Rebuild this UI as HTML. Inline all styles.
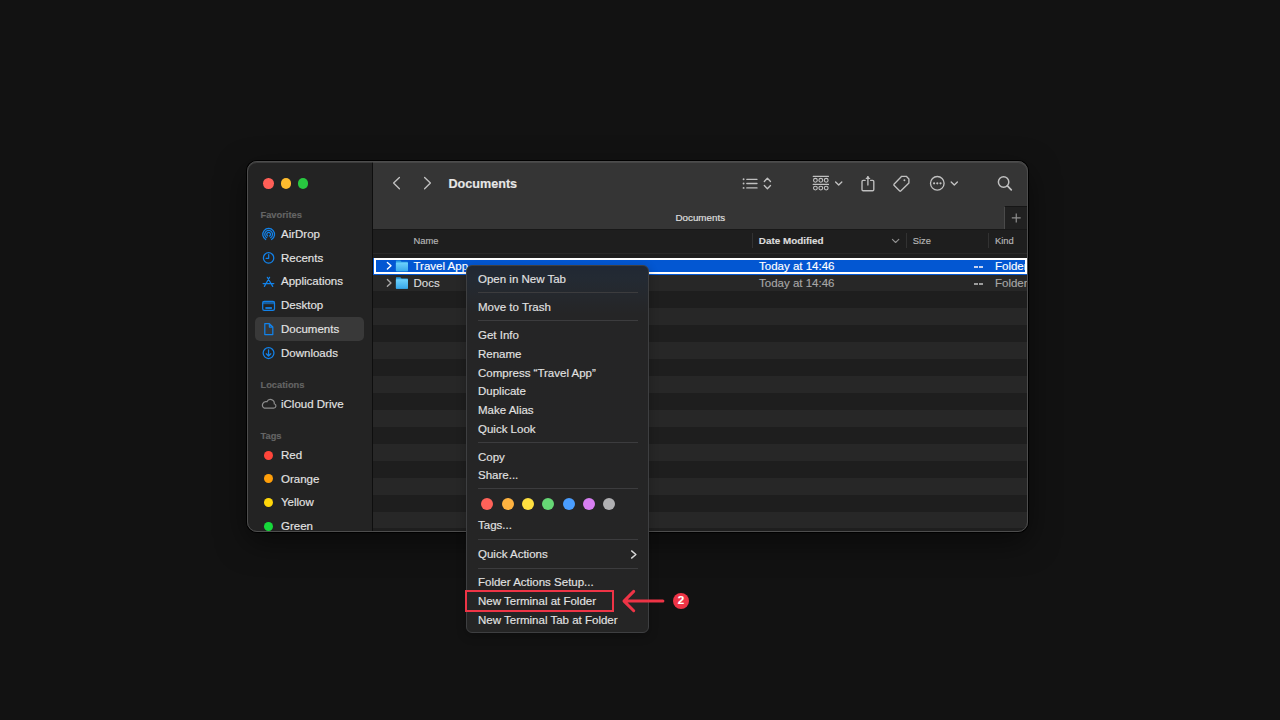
<!DOCTYPE html>
<html><head><meta charset="utf-8">
<style>
*{margin:0;padding:0;box-sizing:border-box}
html,body{width:1280px;height:720px;overflow:hidden;background:#121212;font-family:"Liberation Sans",sans-serif;}
.a{position:absolute}
.t{position:absolute;white-space:nowrap;-webkit-text-stroke:0.15px currentColor}
#win{position:absolute;left:247px;top:161px;width:781px;height:371px;border-radius:10px;overflow:hidden;background:#1e1e1e;box-shadow:0 0 0 1px #000,0 10px 30px rgba(0,0,0,.5)}
#wb{position:absolute;left:247px;top:161px;width:781px;height:371px;border-radius:10px;border:1px solid #4d4d4d;box-shadow:inset 0 1px 0 rgba(90,90,90,.45);pointer-events:none}
#pg{position:absolute;left:-247px;top:-161px;width:1280px;height:720px}
.side{left:247px;top:161px;width:125px;height:371px;background:#232323}
.sdiv{left:372px;top:161px;width:1px;height:371px;background:#0e0e0e}
.tb{left:373px;top:161px;width:655px;height:68px;background:#353535}
.tbl{left:373px;top:229px;width:655px;height:1px;background:#181818}
.hdr{left:373px;top:230px;width:655px;height:22px;background:#1e1e1e}
.hl{left:373px;top:252.5px;width:655px;height:1.7px;background:#292929}
.row{left:373px;width:655px;height:16.93px}
.lt{background:#272727}
.sb{font-size:11.5px;color:#e4e4e4;line-height:16px;left:281px}
.sh{font-size:9.3px;font-weight:bold;color:#656565;line-height:12px;left:260.5px}
.mi{font-size:11.5px;color:#e2e2e2;line-height:16px;left:478px}
.sep{left:477.5px;width:160px;height:1px;background:#3c3c3e}
.ht{font-size:9.4px;color:#b8b8b8;line-height:14px}
.rt{font-size:11.5px;color:#dcdcdc;line-height:16px}
.dot{border-radius:50%}
</style></head><body>
<div id="win"><div id="pg">
  <div class="a side"></div>
  <div class="a sdiv"></div>
  <div class="a tb"></div>
  <div class="a tbl"></div>
  <div class="a hdr"></div>
  <div class="a hl"></div>
  <!-- rows -->
  <div class="a row lt" style="top:274.50px"></div>
  <div class="a row lt" style="top:308.36px"></div>
  <div class="a row lt" style="top:342.22px"></div>
  <div class="a row lt" style="top:376.08px"></div>
  <div class="a row lt" style="top:409.94px"></div>
  <div class="a row lt" style="top:443.80px"></div>
  <div class="a row lt" style="top:477.66px"></div>
  <div class="a row lt" style="top:511.52px"></div>

  <!-- traffic lights -->
  <div class="a dot" style="left:263.2px;top:178.1px;width:10.8px;height:10.8px;background:#ff5f57"></div>
  <div class="a dot" style="left:280.5px;top:178.1px;width:10.8px;height:10.8px;background:#febc2e"></div>
  <div class="a dot" style="left:297.7px;top:178.1px;width:10.8px;height:10.8px;background:#28c840"></div>

  <!-- sidebar -->
  <div class="t sh" style="top:209.4px">Favorites</div>
  <div class="t sb" style="top:226.3px">AirDrop</div>
  <div class="t sb" style="top:250px">Recents</div>
  <div class="t sb" style="top:273.3px">Applications</div>
  <div class="t sb" style="top:297.3px">Desktop</div>
  <div class="a" style="left:255px;top:317px;width:109px;height:23.5px;border-radius:5px;background:#393939"></div>
  <div class="t sb" style="top:321px">Documents</div>
  <div class="t sb" style="top:345px">Downloads</div>
  <div class="t sh" style="top:379.3px">Locations</div>
  <div class="t sb" style="top:395.5px">iCloud Drive</div>
  <div class="t sh" style="top:430.2px">Tags</div>
  <div class="a dot" style="left:264px;top:450.8px;width:9px;height:9px;background:#ff453a"></div>
  <div class="t sb" style="top:447px">Red</div>
  <div class="a dot" style="left:264px;top:474.3px;width:9px;height:9px;background:#ff9f0a"></div>
  <div class="t sb" style="top:470.5px">Orange</div>
  <div class="a dot" style="left:264px;top:497.8px;width:9px;height:9px;background:#ffd60a"></div>
  <div class="t sb" style="top:494.3px">Yellow</div>
  <div class="a dot" style="left:264px;top:521.5px;width:9px;height:9px;background:#16d83a"></div>
  <div class="t sb" style="top:518px">Green</div>

  <!-- toolbar title -->
  <div class="t" style="left:448.5px;top:175px;font-size:12.6px;font-weight:bold;color:#e6e6e6;line-height:18px">Documents</div>
  <!-- tab bar -->
  <div class="t" style="left:675.5px;top:210.5px;font-size:9.8px;color:#e0e0e0;line-height:14px">Documents</div>
  <div class="a" style="left:1003.9px;top:205.8px;width:24px;height:23.2px;background:#212121;border-left:1px solid #4a4a4a;border-top:1px solid #161616"></div>

  <!-- header -->
  <div class="t ht" style="left:413.5px;top:233.5px">Name</div>
  <div class="a" style="left:752px;top:233px;width:1px;height:15px;background:#323232"></div>
  <div class="t ht" style="left:758.8px;top:233.5px;font-size:9.9px;font-weight:bold;color:#dcdcdc">Date Modified</div>
  <div class="a" style="left:906px;top:233px;width:1px;height:15px;background:#323232"></div>
  <div class="t ht" style="left:912.7px;top:233.5px">Size</div>
  <div class="a" style="left:988px;top:233px;width:1px;height:15px;background:#323232"></div>
  <div class="t ht" style="left:995px;top:233.5px">Kind</div>

  <!-- selected row -->
  <div class="a" style="left:373px;top:257.5px;width:655px;height:17.1px;background:#0357d2"></div>
  <div class="a" style="left:373.8px;top:258.2px;width:653.6px;height:15.8px;border:2px solid #ffffff"></div>
  <div class="t rt" style="left:413.5px;top:258.3px;color:#fff">Travel App</div>
  <div class="t rt" style="left:759px;top:258.3px;color:#fff">Today at 14:46</div>
  <div class="a" style="left:974px;top:266px;width:4.3px;height:1.6px;background:#c6d3f2"></div><div class="a" style="left:979.2px;top:266px;width:4.3px;height:1.6px;background:#c6d3f2"></div>
  <div class="t rt" style="left:995px;top:258.3px;color:#fff">Folder</div>

  <div class="t rt" style="left:413.5px;top:275.4px">Docs</div>
  <div class="t rt" style="left:759px;top:275.4px;color:#a6a6a6">Today at 14:46</div>
  <div class="a" style="left:974px;top:283px;width:4.3px;height:1.6px;background:#9c9c9c"></div><div class="a" style="left:979.2px;top:283px;width:4.3px;height:1.6px;background:#9c9c9c"></div>
  <div class="t rt" style="left:995px;top:275.4px;color:#a6a6a6">Folder</div>

  <svg class="a" style="left:0;top:0" width="1280" height="720" viewBox="0 0 1280 720">
    <defs>
      <linearGradient id="fg" x1="0" y1="0" x2="0" y2="1"><stop offset="0" stop-color="#6fd3fd"/><stop offset="1" stop-color="#38a8ea"/></linearGradient>
    </defs>
    <g fill="none" stroke="#1282ea" stroke-width="1.25" stroke-linecap="round" stroke-linejoin="round">
      <g transform="translate(0,0.8)"><path d="M265.7 238.7 A5.9 5.9 0 1 1 271.6 238.7"/>
      <path d="M266.7 236.9 A3.9 3.9 0 1 1 270.6 236.9"/>
      <path d="M267.7 235.2 A1.9 1.9 0 1 1 269.6 235.2"/></g>
      <circle cx="268.6" cy="257.9" r="5.2"/>
      <path d="M268.7 254.6 V258.3 H266.1"/>
      <path d="M267.3 277.3 L272.7 286.4 M269.6 277.3 L264.4 286.4 M263.1 283.6 H273.8"/>
      <rect x="262.7" y="301.3" width="11.8" height="9" rx="1.6"/>
      <path d="M265.4 308 H271.9" stroke-width="1.8" stroke-linecap="butt"/>
      <path d="M264.8 323.6 H269.4 L272.8 327 V334.6 H264.8 Z M269.4 323.6 V327 H272.8"/>
      <circle cx="268.55" cy="353.1" r="5.4"/>
      <path d="M268.55 349.9 V356 M266.3 353.8 L268.55 356.1 L270.8 353.8"/>
    </g>
    <rect x="262.7" y="301.3" width="11.8" height="2.9" fill="#1282ea" opacity="0.6"/>
    <path d="M264.4 408.2 H273.6 A2.3 2.3 0 0 0 274.3 403.7 A3.9 3.9 0 0 0 266.9 401.7 A3.5 3.5 0 0 0 264.4 408.2 Z" fill="none" stroke="#8c8c8c" stroke-width="1.2"/>
    <!-- toolbar -->
    <g fill="none" stroke="#c0c0c0" stroke-width="1.35" stroke-linecap="round" stroke-linejoin="round">
      <path d="M399.4 177.4 L393.6 183.1 L399.4 188.7"/>
      <path d="M424.6 177.4 L430.4 183.1 L424.6 188.7"/>
      <path d="M746.8 179.3 H757 M746.8 183.5 H757 M746.8 187.9 H757"/>
      <path d="M764.3 181.5 L767.4 178.3 L770.5 181.5 M764.3 185.5 L767.4 188.7 L770.5 185.5"/>
      <path d="M813.2 176.3 H828.5 M813.2 184.4 H828.5" stroke-width="1.2"/>
      <circle cx="815.4" cy="180.3" r="1.9" stroke-width="1.1"/><circle cx="820.8" cy="180.3" r="1.9" stroke-width="1.1"/><circle cx="826.2" cy="180.3" r="1.9" stroke-width="1.1"/>
      <circle cx="815.4" cy="188.1" r="1.9" stroke-width="1.1"/><circle cx="820.8" cy="188.1" r="1.9" stroke-width="1.1"/><circle cx="826.2" cy="188.1" r="1.9" stroke-width="1.1"/>
      <path d="M835.6 182 L838.7 185.1 L841.8 182"/>
      <path d="M865.2 180.3 H863.2 Q862 180.3 862 181.5 V189.5 Q862 190.7 863.2 190.7 H872.6 Q873.8 190.7 873.8 189.5 V181.5 Q873.8 180.3 872.6 180.3 H870.6"/>
      <path d="M867.9 185 V176.6"/>
      <path d="M901.7 176.3 H906.3 L908.9 178.9 V183 L900.7 191 Q900.2 191.4 899.7 191 L894 185.3 Q893.6 184.8 894 184.3 Z"/>
      <circle cx="937.3" cy="183.3" r="6.8"/>
      <path d="M951.2 182 L954.3 185.1 L957.4 182"/>
      <circle cx="1003.6" cy="182" r="5.2" stroke-width="1.5"/>
      <path d="M1007.4 185.9 L1011.3 189.8" stroke-width="1.7"/>
    </g>
    <g fill="#c0c0c0">
      <circle cx="743.6" cy="179.3" r="0.95"/><circle cx="743.6" cy="183.5" r="0.95"/><circle cx="743.6" cy="187.9" r="0.95"/>
      <path d="M865.3 178.9 L867.9 175.9 L870.5 178.9 Z"/>
      <circle cx="904.4" cy="180.3" r="0.95"/>
      <circle cx="934.1" cy="183.3" r="1.1"/><circle cx="937.3" cy="183.3" r="1.1"/><circle cx="940.5" cy="183.3" r="1.1"/>
    </g>
    <path d="M1011.8 217.9 H1020.7 M1016.25 213.4 V222.4" stroke="#8e8e8e" stroke-width="1.2" fill="none"/>
    <path d="M892.4 239.3 L895.6 242.5 L898.8 239.3" stroke="#909090" stroke-width="1.1" fill="none" stroke-linecap="round" stroke-linejoin="round"/>
    <!-- rows -->
    <g fill="none" stroke-width="1.4" stroke-linecap="round" stroke-linejoin="round">
      <path d="M387.4 262.5 L391 265.8 L387.4 269.1" stroke="#ffffff"/>
      <path d="M387.4 279.6 L391 282.9 L387.4 286.2" stroke="#a8a8a8"/>
    </g>
    <g>
      <path d="M395.9 261.2 Q395.9 260.5 396.6 260.5 H400.3 L401.6 261.7 H407.3 Q408 261.7 408 262.4 V270.6 Q408 271.3 407.3 271.3 H396.6 Q395.9 271.3 395.9 270.6 Z" fill="#2b9fe2"/>
      <rect x="395.9" y="262.4" width="12.1" height="8.9" rx="0.7" fill="url(#fg)"/>
      <path d="M395.9 278.0 Q395.9 277.3 396.6 277.3 H400.3 L401.6 278.5 H407.3 Q408 278.5 408 279.2 V288 Q408 288.7 407.3 288.7 H396.6 Q395.9 288.7 395.9 288 Z" fill="#2b9fe2"/>
      <rect x="395.9" y="279.2" width="12.1" height="9.5" rx="0.7" fill="url(#fg)"/>
    </g>
  </svg>
</div></div>
<div id="wb"></div>

<!-- context menu -->
<div class="a" style="left:466px;top:265px;width:183.4px;height:367.6px;border-radius:6px;background:linear-gradient(#212833 0,#232a33 12px,#25282d 30px,#252526 48px,#252525);border:1px solid #3e3f41;box-shadow:0 3px 10px rgba(0,0,0,.25)"></div>
<div class="t mi" style="top:270.75px">Open in New Tab</div>
<div class="a sep" style="top:292.3px"></div>
<div class="t mi" style="top:299px">Move to Trash</div>
<div class="a sep" style="top:320.4px"></div>
<div class="t mi" style="top:327.2px">Get Info</div>
<div class="t mi" style="top:346.1px">Rename</div>
<div class="t mi" style="top:365px">Compress “Travel App”</div>
<div class="t mi" style="top:383.4px">Duplicate</div>
<div class="t mi" style="top:402.2px">Make Alias</div>
<div class="t mi" style="top:420.7px">Quick Look</div>
<div class="a sep" style="top:442.3px"></div>
<div class="t mi" style="top:449px">Copy</div>
<div class="t mi" style="top:467.2px">Share...</div>
<div class="a sep" style="top:488.3px"></div>
<div class="a dot" style="left:481px;top:497.75px;width:12px;height:12px;background:#ff6259"></div>
<div class="a dot" style="left:501.5px;top:497.75px;width:12px;height:12px;background:#ffb340"></div>
<div class="a dot" style="left:521.9px;top:497.75px;width:12px;height:12px;background:#ffe040"></div>
<div class="a dot" style="left:542.1px;top:497.75px;width:12px;height:12px;background:#66d775"></div>
<div class="a dot" style="left:562.5px;top:497.75px;width:12px;height:12px;background:#4a9eff"></div>
<div class="a dot" style="left:583px;top:497.75px;width:12px;height:12px;background:#d87ff2"></div>
<div class="a dot" style="left:603.1px;top:497.75px;width:12px;height:12px;background:#b0b0b2"></div>
<div class="t mi" style="top:517.3px">Tags...</div>
<div class="a sep" style="top:539.2px"></div>
<div class="t mi" style="top:546px">Quick Actions</div>
<div class="a sep" style="top:567.7px"></div>
<div class="t mi" style="top:574.1px">Folder Actions Setup...</div>
<div class="t mi" style="top:593.1px">New Terminal at Folder</div>
<div class="t mi" style="top:611.7px">New Terminal Tab at Folder</div>

<!-- annotation -->
<svg class="a" style="left:0;top:0" width="1280" height="720" viewBox="0 0 1280 720">
  <path d="M631.6 550.9 L635.9 554.5 L631.6 558.1" fill="none" stroke="#d8d8d8" stroke-width="1.4" stroke-linecap="round" stroke-linejoin="round"/>
  <path d="M662.9 601.1 H624.6 M633.7 591.4 L624 601.1 L633.7 610.7" fill="none" stroke="#ee3446" stroke-width="3" stroke-linecap="round" stroke-linejoin="round"/>
</svg>

<div class="a" style="left:465px;top:590px;width:149px;height:22px;border:2.7px solid #ee3446"></div>
<div class="a dot" style="left:672.7px;top:593px;width:16px;height:16px;background:#ee3446"></div>
<div class="t" style="left:672.9px;top:591.6px;width:16px;text-align:center;font-size:11.6px;font-weight:bold;color:#fff;line-height:16px">2</div>
</body></html>
